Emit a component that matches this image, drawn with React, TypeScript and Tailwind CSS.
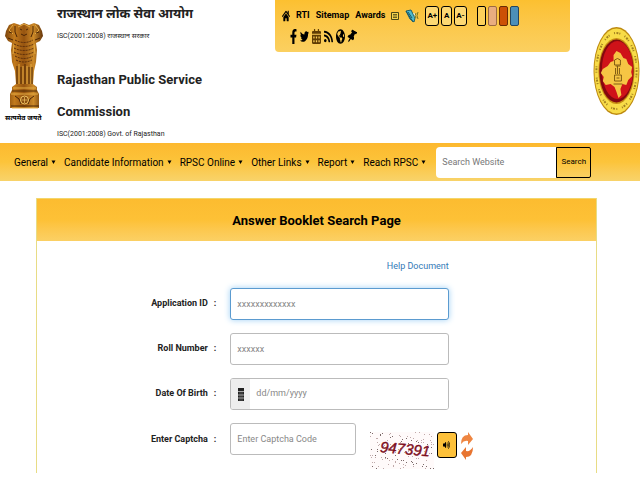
import type { ReactNode } from "react";
import {
  FaCalendarAlt,
  FaFacebookF,
  FaGlobeAmericas,
  FaHome,
  FaRss,
  FaThumbtack,
  FaTwitter,
  FaVolumeUp,
} from "react-icons/fa";

const menu = ["General", "Candidate Information", "RPSC Online", "Other Links", "Report", "Reach RPSC"];

function Emblem() {
  return (
    <svg viewBox="0 0 38 87" className="h-[87px] w-[38px]" aria-label="State emblem">
      <defs>
        <linearGradient id="gold" x1="0" x2="1">
          <stop offset="0" stopColor="#7a430c" />
          <stop offset=".25" stopColor="#c27a1c" />
          <stop offset=".5" stopColor="#965410" />
          <stop offset=".75" stopColor="#cd8a28" />
          <stop offset="1" stopColor="#64340a" />
        </linearGradient>
      </defs>
      <path
        fill="url(#gold)"
        d="M9 1 4 3 1 9 0 14l3 5 4 2-1 7 1 12 3 9 1 13-4 3v3l-2 4v14h29V72l-2-4v-3l-4-3 1-13 2-9 1-12-1-7 4-2 3-5-1-5-3-6-5-2-5 2-5-2-4 2z"
      />
      <path
        fill="none"
        stroke="#e5ac43"
        d="M8 3 4 8l4 4M30 3l4 5-4 4M13 5l6-3 6 3M9 22 8 32M29 22l1 10M14 42v20M18 44v18M22 44v18M26 42v20M8 66h23M6 72h27M7 86h26"
      />
      <path
        fill="none"
        stroke="#4d2605"
        d="M10 4v6l2 5M28 4v6l-2 5M15 7l2 1M21 8l2-1M16 12q3 3 6 0M4 10l3 1M34 10l-3 1M3 16l5 2M35 16l-5 2M12 44v18M16 45v17M20 42v20M24 45v17M27 45v17M7 69h25M6 84h28M10 74l4 3 2 5M29 74l-4 3-2 5"
      />
      <path
        fill="none"
        stroke="#54290a"
        strokeDasharray="2 1"
        d="M10 18q9 5 18 0M9 22q10 5 20 0M9 26q10 5 20 0M9 30q10 5 20 0M10 34q9 5 18 0M11 38q8 4 16 0"
      />
      <circle cx="19.500" cy="78" r="4" fill="#8a4d0f" stroke="#f1c564" />
      <path d="M19.500 75v6M16.500 78h6" stroke="#f1c564" strokeWidth=".7" />
    </svg>
  );
}

function Seal() {
  return (
    <svg viewBox="0 0 48 90" preserveAspectRatio="none" className="h-[90px] w-[47px]" aria-label="Commission seal">
      <ellipse cx="24" cy="45" rx="23.500" ry="44" fill="#bd8a10" />
      <ellipse cx="24" cy="45" rx="22.500" ry="42.500" fill="#f8dc48" />
      <ellipse
        cx="24"
        cy="45"
        rx="20.500"
        ry="38"
        fill="none"
        stroke="#7d5a10"
        strokeWidth="2"
        strokeDasharray="1 1.500 2 1 1 5"
        opacity=".7"
      />
      <ellipse cx="24" cy="45" rx="18.500" ry="33" fill="#c68d14" />
      <ellipse cx="24" cy="45" rx="17.500" ry="31.500" fill="#84090f" />
      <ellipse cx="25" cy="44" rx="16" ry="29" fill="#cf1219" />
      <path
        fill="#f6c544"
        d="m21 29 3-4 4 2 3 5 3 1 2 5 4 3-1 5 1 4-4 4-2 5-4-1-2 5 1 6-3 3-2-6-2-5-4-3-5 1-3-4 1-4-3-4 2-4 5-3 3-4 3-1z"
      />
      <path
        fill="none"
        stroke="#74500e"
        strokeWidth=".9"
        d="M22 34q3-3 6 0v5h-6zM23 40h5M23 42v6M25 40v8M27 42v6M22 49h7v6h-7zM24 52h3M21 58h9"
      />
    </svg>
  );
}

function Captcha() {
  const dots = Array.from({ length: 130 }, (_, i) => ({
    x: (i * 37 + ((i * i) % 11)) % 64,
    y: (i * 23 + ((i * i) % 7)) % 37,
  }));
  return (
    <svg viewBox="0 0 64 37" className="h-[37px] w-16 bg-[#fffafa]" aria-label="Captcha">
      {dots.map((d, i) => (
        <rect key={i} x={d.x} y={d.y} width="1" height="1" fill={i % 3 ? "#c0a9a9" : "#7b6a6a"} />
      ))}
      <text
        x="10"
        y="22"
        transform="rotate(5 32 18)"
        fill="#7d0d1c"
        stroke="#7d0d1c"
        strokeWidth=".4"
        className="font-['Liberation_Sans',sans-serif] text-[15px] italic"
      >
        947391
      </text>
    </svg>
  );
}

function TopLink({ label, children }: { label: string; children: ReactNode }) {
  return (
    <a href="#" aria-label={label} className="flex items-center">
      {children}
    </a>
  );
}

function Row({ id, label, children }: { id: string; label: string; children: ReactNode }) {
  return (
    <div className="grid grid-cols-[193fr_218fr_147fr] items-center">
      <label htmlFor={id} className="flex justify-end gap-[6px] pr-[14px] text-[9px] font-bold text-[#222]">
        <span>{label}</span>
        <span>:</span>
      </label>
      {children}
    </div>
  );
}

const field =
  "h-8 w-full min-w-0 rounded-[3px] border border-[#bbb] bg-white px-[6px] text-[9px] text-[#555] outline-none placeholder:text-[#888]";

export default function App() {
  return (
    <div className="min-h-screen bg-white font-['Roboto','Liberation_Sans','Noto_Sans',sans-serif] text-black">
      <header className="flex h-[143px] items-start">
        <div className="flex w-[57px] flex-col pt-[22px] pl-[5px]">
          <Emblem />
          <span className="pt-px text-[7px] leading-4 font-bold whitespace-nowrap">सत्यमेव जयते</span>
        </div>
        <div className="w-[218px] text-[#222]">
          <p className="h-7 text-[13px] leading-7 font-bold whitespace-nowrap">राजस्थान लोक सेवा आयोग</p>
          <p className="h-9 text-[7px] leading-4 whitespace-nowrap">ISC(2001:2008) राजस्थान सरकार</p>
          <h1 className="w-[160px] text-[13px] leading-8 font-bold">Rajasthan Public Service Commission</h1>
          <p className="text-[7px] leading-3">ISC(2001:2008) Govt. of Rajasthan</p>
        </div>
        <div className="h-[52px] flex-1 rounded-b-sm bg-linear-to-b from-[#fcc030] to-[#fbd060] pt-[6px] pl-[7px] text-[9px] font-bold">
          <div className="flex h-5 items-center gap-[6px]">
            <TopLink label="Home">
              <FaHome preserveAspectRatio="none" className="h-3 w-2" />
            </TopLink>
            <a href="#">RTI</a>
            <a href="#">Sitemap</a>
            <a href="#">Awards</a>
            <TopLink label="News">
              <svg viewBox="0 0 8 10" className="h-[10px] w-2">
                <path d="M.5 1.500h7v7h-7z" fill="#f4d34c" stroke="#4b4816" />
                <path d="M2 3.500h4M2 5h4M2 6.500h4" stroke="#4b4816" strokeWidth=".8" />
              </svg>
            </TopLink>
            <TopLink label="Screen reader">
              <svg viewBox="0 0 14 14" className="h-[14px] w-[14px]">
                <path d="m1 2 5-1 4 8-1 4-4-3z" fill="#4bb8cc" stroke="#205f6a" />
                <path d="m3 3 4 6M1 2l7 11" stroke="#1c5662" />
                <path d="m8 4 3 1-1 3z" fill="#dff4f5" />
                <path d="M11 4q-2 3 0 5M13 3q-2 4 0 7" fill="none" stroke="#7a7620" />
              </svg>
            </TopLink>
            <div className="flex gap-[2px]">
              {["A+", "A", "A-"].map((size) => (
                <button
                  key={size}
                  className="h-5 min-w-[11px] rounded-[3px] border border-black bg-[#fdd873] px-px text-[8px]"
                >
                  {size}
                </button>
              ))}
            </div>
            <div className="ml-1 flex gap-[2px]">
              <button aria-label="Yellow theme" className="h-5 w-[9px] rounded-[2px] border border-black bg-[#fdd05a]" />
              <button aria-label="Pink theme" className="h-5 w-[9px] rounded-[2px] border border-[#9c6b42] bg-[#e9ad80]" />
              <button aria-label="Orange theme" className="h-5 w-[9px] rounded-[2px] border border-[#692c05] bg-[#cc5006]" />
              <button aria-label="Blue theme" className="h-5 w-[9px] rounded-[2px] border border-[#25465f] bg-[#4b8fb9]" />
            </div>
          </div>
          <div className="flex h-5 items-center gap-[3px] pl-2">
            <TopLink label="Facebook">
              <FaFacebookF preserveAspectRatio="none" className="h-[15px] w-[7px]" />
            </TopLink>
            <TopLink label="Twitter">
              <FaTwitter preserveAspectRatio="none" className="h-[13px] w-[9px]" />
            </TopLink>
            <TopLink label="Calendar">
              <FaCalendarAlt preserveAspectRatio="none" className="h-[15px] w-[9px] text-[#5f3c04]" />
            </TopLink>
            <TopLink label="Feed">
              <FaRss preserveAspectRatio="none" className="h-[13px] w-[9px]" />
            </TopLink>
            <TopLink label="World">
              <FaGlobeAmericas preserveAspectRatio="none" className="h-[15px] w-[9px]" />
            </TopLink>
            <TopLink label="Pin">
              <FaThumbtack preserveAspectRatio="none" className="h-[13px] w-[7px] rotate-30" />
            </TopLink>
          </div>
        </div>
        <div className="flex w-[70px] justify-end pt-[26px]">
          <Seal />
        </div>
      </header>

      <nav className="flex h-[38px] items-center bg-linear-to-b from-[#fdb92f] via-[#fcc43a] to-[#f8d36a] pl-[14px] text-[10px]">
        <ul className="flex gap-2">
          {menu.map((item) => (
            <li key={item}>
              <a href="#" className="flex items-center gap-[3px] whitespace-nowrap">
                {item}
                <svg viewBox="0 0 5 4" className="h-1 w-[5px]">
                  <path d="M.5.500h4L2.500 4z" />
                </svg>
              </a>
            </li>
          ))}
        </ul>
        <form className="ml-[10px] flex">
          <input
            type="search"
            aria-label="Search Website"
            placeholder="Search Website"
            className="h-[31px] w-[120px] rounded-l-sm bg-white px-[6px] text-[9px] outline-none placeholder:text-[#777]"
          />
          <button type="button" className="h-[31px] w-[35px] rounded-r-[2px] border border-black text-[8px]">
            Search
          </button>
        </form>
      </nav>

      <main className="mt-[17px] mr-[43px] ml-9 border-x border-[#e8dc85] pb-1">
        <h2 className="h-[43px] border-t border-[#f3d66b] bg-linear-to-b from-[#fcbc30] via-[#fdc136] to-[#fbd064] text-center text-[13px] leading-[43px] font-bold">
          Answer Booklet Search Page
        </h2>
        <form className="flex flex-col gap-[13px] pt-4">
          <div className="grid grid-cols-[193fr_218fr_147fr]">
            <a href="#" className="col-start-2 text-right text-[9px] leading-[18px] text-[#337ab7]">
              Help Document
            </a>
          </div>
          <Row id="application" label="Application ID">
            <input
              id="application"
              placeholder="xxxxxxxxxxxxx"
              className="h-8 w-full min-w-0 rounded-[3px] border border-[#5b9bd0] bg-white px-[6px] text-[9px] text-[#555] shadow-[0_0_6px_#9fd0f5] outline-none placeholder:text-[#888]"
            />
          </Row>
          <Row id="roll" label="Roll Number">
            <input id="roll" placeholder="xxxxxx" className={field} />
          </Row>
          <Row id="birth" label="Date Of Birth">
            <div className="flex h-8 overflow-hidden rounded-[3px] border border-[#bbb]">
              <span className="flex w-[19px] shrink-0 items-center justify-center bg-[#eee]">
                <svg viewBox="0 0 6 13" className="h-[13px] w-[6px]">
                  <path d="M0 0h6v13H0z" fill="#222" />
                  <path d="M0 3.500h6M0 7h6M0 10h6" stroke="#ddd" strokeWidth=".7" />
                  <path d="M2 4v9M4 4v9" stroke="#999" strokeWidth=".4" />
                </svg>
              </span>
              <input
                id="birth"
                placeholder="dd/mm/yyyy"
                className="w-full min-w-0 bg-white px-[6px] text-[9px] outline-none placeholder:text-[#888]"
              />
            </div>
          </Row>
          <div className="grid grid-cols-[193fr_125fr_240fr] items-start">
            <label
              htmlFor="captcha"
              className="flex justify-end gap-[6px] pr-[14px] text-[9px] leading-8 font-bold text-[#222]"
            >
              <span>Enter Captcha</span>
              <span>:</span>
            </label>
            <input id="captcha" placeholder="Enter Captcha Code" className={field} />
            <div className="flex items-start gap-[3px] pt-[9px] pl-[14px]">
              <Captcha />
              <button
                type="button"
                aria-label="Listen"
                className="flex h-[26px] w-5 items-center justify-center rounded-[3px] border border-black bg-[#fdc13a]"
              >
                <FaVolumeUp preserveAspectRatio="none" className="h-2 w-[7px]" />
              </button>
              <button type="button" aria-label="Refresh captcha">
                <svg viewBox="0 0 14 28" className="h-7 w-[14px]">
                  <path d="M1 12Q1 3 8 3V0l5 7-5 6V9Q4 8 1 12z" fill="#ee8541" />
                  <path d="M13 15q0 10-7 10v3l-5-7 5-6v4q4 1 7-4z" fill="#e87531" />
                </svg>
              </button>
            </div>
          </div>
        </form>
      </main>
    </div>
  );
}
